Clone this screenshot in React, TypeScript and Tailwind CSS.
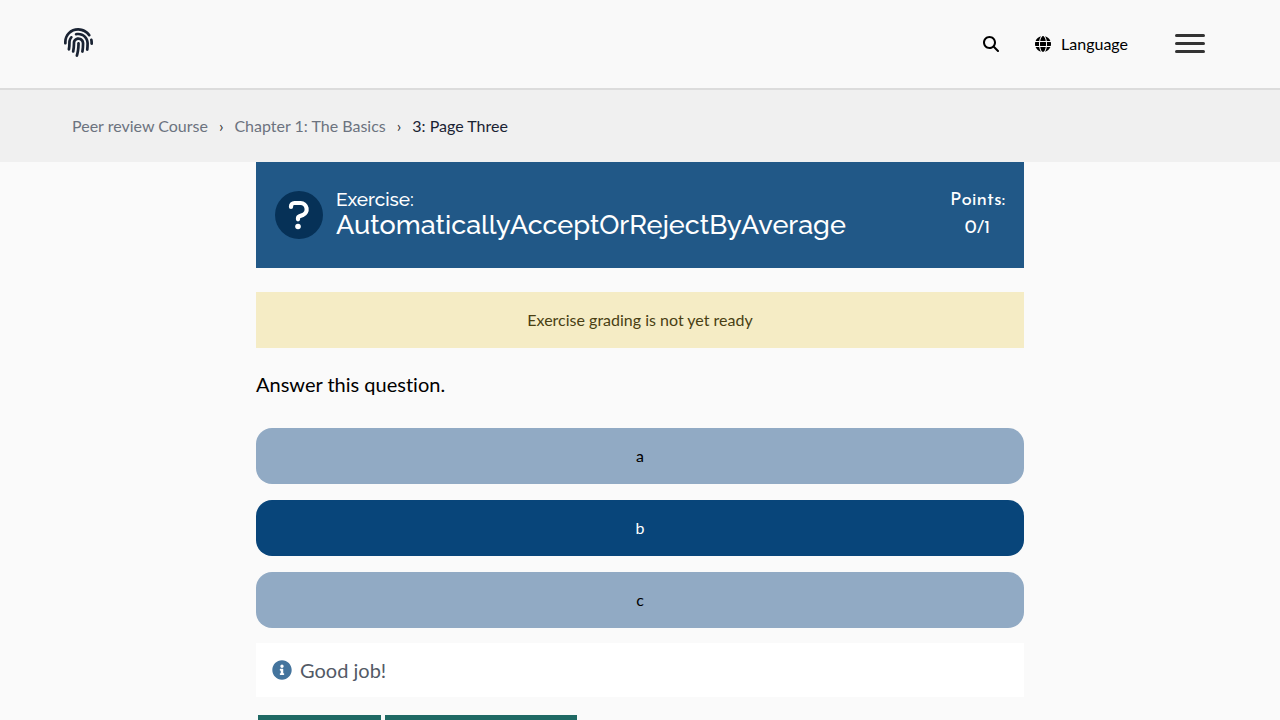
import React from "react";
import { FaFingerprint, FaInfoCircle } from "react-icons/fa";
import { FaGlobe, FaMagnifyingGlass } from "react-icons/fa6";

const options = [
  { label: "a", selected: false },
  { label: "b", selected: true },
  { label: "c", selected: false },
];

function Header() {
  return (
    <header className="flex h-[90px] items-center justify-between border-b-2 border-[#dcdcdc] bg-[#f9f9f9] pr-[75px] pl-16">
      <a href="#home" aria-label="Home" className="mb-1 text-[#1a2333]">
        <FaFingerprint size={29} />
      </a>
      <nav className="flex items-center text-black">
        <button type="button" aria-label="Search" className="mr-9">
          <FaMagnifyingGlass size={16} />
        </button>
        <button type="button" className="mr-[47px] flex items-center gap-[10px] leading-6">
          <FaGlobe size={16} />
          Language
        </button>
        <button type="button" aria-label="Open menu" className="mb-[2px] flex w-[30px] flex-col gap-[5px]">
          <span className="h-[3px] rounded-full bg-[#333333]" />
          <span className="h-[3px] rounded-full bg-[#333333]" />
          <span className="h-[3px] rounded-full bg-[#333333]" />
        </button>
      </nav>
    </header>
  );
}

function Breadcrumbs() {
  return (
    <nav aria-label="Breadcrumbs" className="bg-[#f0f0f0] px-[72px] py-6">
      <ol className="flex items-center gap-[11px] leading-6 text-[#6c737f]">
        <li><a href="#course">Peer review Course</a></li>
        <li aria-hidden="true" className="text-[#333333]">›</li>
        <li><a href="#chapter">Chapter 1: The Basics</a></li>
        <li aria-hidden="true" className="text-[#333333]">›</li>
        <li><a href="#page" className="text-[#1a2333]">3: Page Three</a></li>
      </ol>
    </nav>
  );
}

function QuestionIcon() {
  return (
    <svg viewBox="0 0 48 48" className="mr-[13px] h-12 w-12 shrink-0" aria-hidden="true">
      <circle cx="24" cy="24" r="24" fill="#063157" />
      <path
        d="M16 16v-.6a3.4 3.4 0 0 1 3.4-3.4h6.2a6.3 6.3 0 0 1 2.2 12.1l-3.3 1.1a2.2 2.2 0 0 0-1.5 2.1v1"
        fill="none"
        stroke="#fff"
        strokeWidth="4.2"
        strokeLinecap="round"
        strokeLinejoin="round"
      />
      <circle cx="23" cy="35.5" r="2.8" fill="#fff" />
    </svg>
  );
}

function ExerciseHeader() {
  return (
    <div className="flex h-[106px] items-center bg-[#215887] px-[19px] text-white">
      <QuestionIcon />
      <h2 className="flex-1 pb-1 font-['Raleway','Lato',sans-serif] font-medium">
        <span className="block text-[19px] leading-6">Exercise:</span>
        <span className="block text-[27px] leading-7">AutomaticallyAcceptOrRejectByAverage</span>
      </h2>
      <div className="text-center font-['Josefin_Sans','Lato',sans-serif] text-[19px] leading-7 font-normal">
        <div>Points:</div>
        <div>0/1</div>
      </div>
    </div>
  );
}

export default function App() {
  return (
    <div className="min-h-screen bg-[#fafafa] font-['Lato',sans-serif] text-base [font-variant-ligatures:none]">
      <Header />
      <Breadcrumbs />
      <main className="mx-auto max-w-3xl">
        <ExerciseHeader />
        <p className="mt-6 bg-[#f5ecc5] p-4 text-center leading-6 text-[#493f13]">Exercise grading is not yet ready</p>
        <p className="mt-5 text-xl leading-8 text-black">Answer this question.</p>
        <div className="mt-7 flex flex-col gap-4">
          {options.map((option) => (
            <button
              key={option.label}
              type="button"
              aria-pressed={option.selected}
              className={
                option.selected
                  ? "rounded-2xl bg-[#08457a] p-4 leading-6 text-white"
                  : "rounded-2xl bg-[#91aac4] p-4 leading-6 text-black"
              }
            >
              {option.label}
            </button>
          ))}
        </div>
        <div className="mt-[15px] flex h-[54px] items-center gap-2 bg-white px-4 text-xl text-[#535a66]">
          <FaInfoCircle size={20} className="text-[#44749d]" />
          <span>Good job!</span>
        </div>
        <div className="flex gap-1 px-[2px] pt-[18px] pb-8">
          <button type="button" className="w-[123px] bg-[#1f6964] py-3 text-lg text-white">Try again</button>
          <button type="button" className="w-48 bg-[#1f6964] py-3 text-lg text-white">Start peer review</button>
        </div>
      </main>
    </div>
  );
}
